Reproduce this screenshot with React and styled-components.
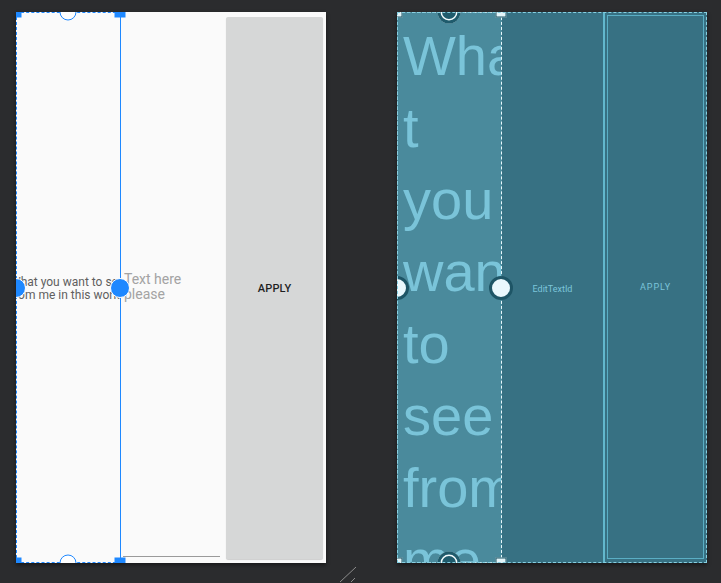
import React from 'react';
import styled, { createGlobalStyle, css } from 'styled-components';

const Global = createGlobalStyle`
  html, body {
    margin: 0;
    background: #2b2c2e;
  }
  body {
    font-family: Roboto, "Noto Sans", sans-serif;
  }
`;

const Canvas = styled.div`
  position: relative;
  display: flex;
  gap: 71px;
  padding: 12px 0 0 16px;
  height: 583px;
  box-sizing: border-box;
  overflow: hidden;
`;

const Screen = styled.div`
  position: relative;
  display: flex;
  width: 310px;
  height: 551px;
  overflow: hidden;
  flex-shrink: 0;
  box-shadow: 0 2px 4px rgba(0, 0, 0, 0.45);
  background: #fafafa;
  ${p => p.$blueprint && css`
    background: #377183;
    &::after {
      content: '';
      position: absolute;
      inset: 0;
      border: 1px dashed #86d0e2;
      pointer-events: none;
    }
  `}
`;

// the three columns of the layout: 104 / 103 / 103
const Column = styled.div`
  flex: 0 0 ${p => p.$w}px;
  box-sizing: border-box;
  min-width: 0;
`;

/* design view */
const SelectedColumn = styled(Column)`
  display: flex;
  align-items: center;
  overflow: hidden;
  border: 1px dashed #1e88ff;
  border-right-style: solid;
`;

const SmallText = styled.div`
  margin: 3px 0 0 -7px;
  font-size: 12px;
  line-height: 13px;
  color: #5f5f5f;
  white-space: pre;
`;

const EditColumn = styled(Column)`
  display: flex;
  flex-direction: column;
`;

const Hint = styled.div`
  flex: 1;
  display: flex;
  align-items: center;
  padding: 0 0 0 3px;
  margin-top: 6px;
  font-size: 14px;
  line-height: 15px;
  color: #a3a3a3;
  white-space: pre;
`;

const Underline = styled.div`
  height: 1px;
  margin: 0 3px 6px 2px;
  background: #9a9a9a;
`;

const ButtonColumn = styled(Column)`
  display: flex;
  padding: 5px 3px 4px 3px;
`;

const Button = styled.div`
  flex: 1;
  display: flex;
  align-items: center;
  justify-content: center;
  background: #d6d7d7;
  border-radius: 2px;
  box-shadow: 0 1px 1px rgba(0, 0, 0, 0.18);
  font-size: 11px;
  font-weight: 500;
  color: #1f1f1f;
  letter-spacing: 0.2px;
`;

/* blueprint view */
const BpLeft = styled(Column)`
  overflow: hidden;
  background: #4a8a9c;
  border: 1px dashed #e9f8fc;
`;

const BigText = styled.div`
  padding: 7px 0 0 5px;
  font-family: "Liberation Sans", Arial, sans-serif;
  font-size: 56px;
  line-height: 72px;
  color: #7ac4d9;
  white-space: pre;
`;

const BpMid = styled(Column)`
  display: flex;
  align-items: center;
  justify-content: center;
  border-right: 2px solid #62b8cd;
  font-size: 9px;
  color: #7cc5da;
  padding-top: 3px;
`;

const BpRight = styled(Column)`
  display: flex;
  padding: 3px 3px 4px 2px;
`;

const BpButton = styled.div`
  flex: 1;
  display: flex;
  align-items: center;
  justify-content: center;
  border: 1px solid #5aaec4;
  font-size: 9px;
  letter-spacing: 0.9px;
  color: #7cc5da;
`;

/* selection overlay */
const Handles = styled.div`
  position: absolute;
  top: 0;
  bottom: 0;
  left: 0;
  width: 104px;
  pointer-events: none;
`;

const Corner = styled.span`
  position: absolute;
  left: ${p => p.$x}%;
  top: ${p => p.$y}%;
  width: 11px;
  height: 11px;
  box-sizing: border-box;
  transform: translate(-50%, -50%);
  background: #1e88ff;
  ${p => p.$blueprint && css`
    background: #e4f5f9;
    border: 1px solid #1d5465;
  `}
`;

const anchorLooks = {
  hollow: css`
    width: 17px;
    height: 17px;
    background: #fff;
    border: 1.5px solid #1e88ff;
  `,
  solid: css`
    width: 20px;
    height: 20px;
    background: #1e88ff;
    border: 1.5px solid #fff;
  `,
  bpRing: css`
    width: 23px;
    height: 23px;
    background: #1f5b6c;
    box-shadow: inset 0 0 0 3px #1f5b6c, inset 0 0 0 4.5px #f2fbfd;
  `,
  bpDot: css`
    width: 24px;
    height: 24px;
    background: #eaf8fd;
    border: 3px solid #1e5566;
  `,
};

const Anchor = styled.span`
  position: absolute;
  left: ${p => p.$x}%;
  top: ${p => p.$y}%;
  box-sizing: border-box;
  border-radius: 50%;
  transform: translate(-50%, -50%);
  ${p => anchorLooks[p.$look]}
`;

const Grip = styled.svg`
  position: absolute;
  left: 336px;
  top: 564px;
`;

function Selection({ blueprint }) {
  const edge = blueprint ? 'bpDot' : 'solid';
  const cap = blueprint ? 'bpRing' : 'hollow';
  return (
    <Handles>
      <Corner $x={0} $y={0} $blueprint={blueprint} />
      <Corner $x={100} $y={0} $blueprint={blueprint} />
      <Corner $x={0} $y={100} $blueprint={blueprint} />
      <Corner $x={100} $y={100} $blueprint={blueprint} />
      <Anchor $x={50} $y={0} $look={cap} />
      <Anchor $x={50} $y={100} $look={cap} />
      <Anchor $x={0} $y={50} $look={edge} />
      <Anchor $x={100} $y={50} $look={edge} />
    </Handles>
  );
}

const bigLines = ['Wha', 't', 'you', 'wan', 'to', 'see', 'from', 'me'];

export default function App() {
  return (
    <>
      <Global />
      <Canvas>
        <Screen>
          <SelectedColumn $w={105}>
            <SmallText>{'What you want to see\nfrom me in this work'}</SmallText>
          </SelectedColumn>
          <EditColumn $w={102}>
            <Hint>{'Text here\nplease'}</Hint>
            <Underline />
          </EditColumn>
          <ButtonColumn $w={103}>
            <Button>APPLY</Button>
          </ButtonColumn>
          <Selection />
        </Screen>

        <Screen $blueprint>
          <BpLeft $w={105}>
            <BigText>{bigLines.join('\n')}</BigText>
          </BpLeft>
          <BpMid $w={103}>EditTextId</BpMid>
          <BpRight $w={102}>
            <BpButton>APPLY</BpButton>
          </BpRight>
          <Selection blueprint />
        </Screen>

        <Grip width="22" height="19" viewBox="0 0 22 19">
          <line x1="20" y1="3" x2="4" y2="18" stroke="#8c8c8c" strokeWidth="1" />
          <line x1="19" y1="14" x2="15" y2="18" stroke="#8c8c8c" strokeWidth="1" />
        </Grip>
      </Canvas>
    </>
  );
}
